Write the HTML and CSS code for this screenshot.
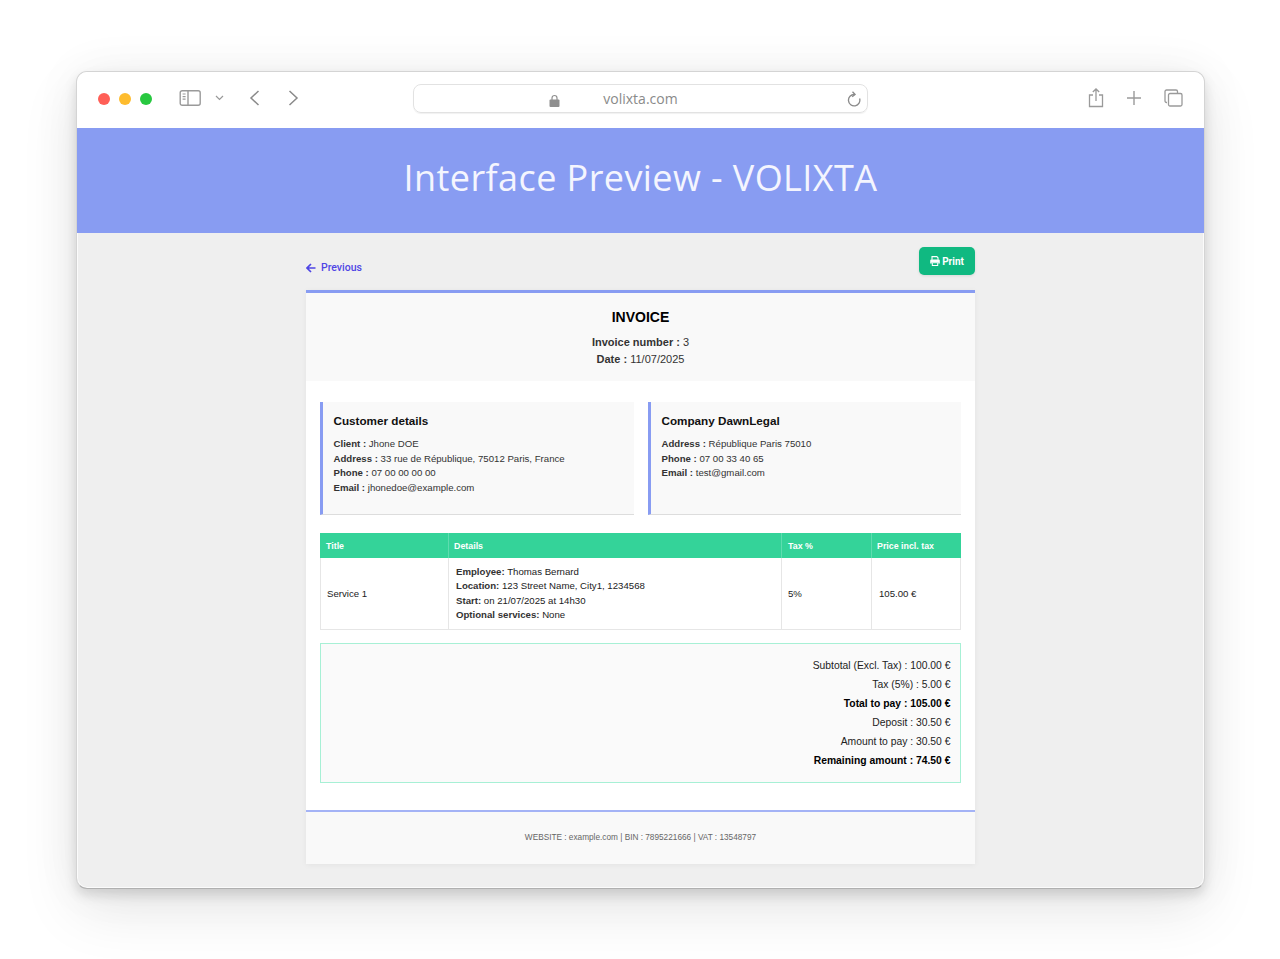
FILE: index.html
```html
<!DOCTYPE html>
<html lang="en">
<head>
<meta charset="utf-8">
<title>Interface Preview - VOLIXTA</title>
<link rel="stylesheet" href="styles.css">
</head>
<body>
<div class="window">
  <header class="chrome">
    <div class="lights">
      <span class="light red"></span><span class="light yellow"></span><span class="light green"></span>
    </div>
    <svg class="ic-sidebar" width="23" height="18" viewBox="0 0 23 18" fill="none" stroke="#9a9a9a" stroke-width="1.4"><rect x="1.2" y="1.7" width="20" height="14.6" rx="2"/><path d="M9 1.7v14.6"/><path d="M3.6 5h3M3.6 7.6h3M3.6 10.2h3" stroke-width="1.2"/></svg>
    <svg class="ic-chev" width="9" height="6" viewBox="0 0 9 6" fill="none" stroke="#999" stroke-width="1.2"><path d="M1 1l3.5 3.5L8 1"/></svg>
    <svg class="ic-back" width="11" height="16" viewBox="0 0 11 16" fill="none" stroke="#8a8a8a" stroke-width="1.5"><path d="M9.5 1L2 8l7.5 7"/></svg>
    <svg class="ic-fwd" width="11" height="16" viewBox="0 0 11 16" fill="none" stroke="#8a8a8a" stroke-width="1.5"><path d="M1.5 1L9 8l-7.5 7"/></svg>
    <div class="address">
      <svg class="ic-lock" width="11" height="13" viewBox="0 0 11 13"><path d="M3 6V4a2.500 2.500 0 0 1 5 0v2" fill="none" stroke="#8f8f8f" stroke-width="1.2"/><rect x="0.500" y="5.500" width="10" height="7.500" rx="1" fill="#8f8f8f"/></svg>
      <span class="url">volixta.com</span>
      <svg class="ic-reload" width="15" height="17" viewBox="0 0 15 17" fill="none" stroke="#8a8a8a" stroke-width="1.3"><path d="M8.300 3.500a5.700 5.700 0 1 0 5.300 4"/><path d="M6.500 0.700l2.600 2.800-2.900 2.300"/></svg>
    </div>
    <div class="actions">
      <svg width="16" height="20" viewBox="0 0 16 20" fill="none" stroke="#9a9a9a" stroke-width="1.3"><path d="M5 7H1.500v11.500h13V7H11"/><path d="M8 13V1M4.800 4L8 1l3.200 3"/></svg>
      <svg width="16" height="16" viewBox="0 0 16 16" fill="none" stroke="#9a9a9a" stroke-width="1.4"><path d="M8 1v14M1 8h14"/></svg>
      <svg width="19" height="18" viewBox="0 0 19 18" fill="none" stroke="#9a9a9a" stroke-width="1.3"><path d="M3 13.500H2.500a1.500 1.500 0 0 1-1.500-1.500V2.500A1.500 1.500 0 0 1 2.500 1H12a1.500 1.500 0 0 1 1.500 1.500V4"/><rect x="4.500" y="4.500" width="13.500" height="12.500" rx="1.500"/></svg>
    </div>
  </header>

  <section class="banner"><h1>Interface Preview - VOLIXTA</h1></section>

  <main class="stage">
    <div class="toolbar">
      <a class="prev"><svg width="10" height="10" viewBox="0 0 10 10" fill="none" stroke="#4f46e5" stroke-width="1.700"><path d="M9.500 5H1.200M5 1L1 5l4 4"/></svg>Previous</a>
      <button class="print"><svg width="10" height="10" viewBox="0 0 10 10"><path d="M2 3.800V.6h4.800L8 1.800v2" fill="none" stroke="#fff" stroke-width="1.100"/><path d="M1.200 3.500h7.600a1 1 0 0 1 1 1v3H8.200V6H1.800v1.500H.2v-3a1 1 0 0 1 1-1z" fill="#fff"/><rect x="2.300" y="6.700" width="5.400" height="2.800" fill="none" stroke="#fff" stroke-width="1"/></svg>Print</button>
    </div>

    <article class="card">
      <div class="card-head">
        <h2>INVOICE</h2>
        <p><b>Invoice number :</b> 3</p>
        <p><b>Date :</b> 11/07/2025</p>
      </div>

      <div class="parties">
        <div class="party">
          <h3>Customer details</h3>
          <p><b>Client :</b> Jhone DOE</p>
          <p><b>Address :</b> 33 rue de République, 75012 Paris, France</p>
          <p><b>Phone :</b> 07 00 00 00 00</p>
          <p><b>Email :</b> jhonedoe@example.com</p>
        </div>
        <div class="party">
          <h3>Company DawnLegal</h3>
          <p><b>Address :</b> République Paris 75010</p>
          <p><b>Phone :</b> 07 00 33 40 65</p>
          <p><b>Email :</b> test@gmail.com</p>
        </div>
      </div>

      <table class="items">
        <thead>
          <tr><th class="c1">Title</th><th class="c2">Details</th><th class="c3">Tax %</th><th class="c4">Price incl. tax</th></tr>
        </thead>
        <tbody>
          <tr>
            <td>Service 1</td>
            <td class="details">
              <div><b>Employee:</b> Thomas Bernard</div>
              <div><b>Location:</b> 123 Street Name, City1, 1234568</div>
              <div><b>Start:</b> on 21/07/2025 at 14h30</div>
              <div><b>Optional services:</b> None</div>
            </td>
            <td>5%</td>
            <td>105.00 €</td>
          </tr>
        </tbody>
      </table>

      <div class="summary">
        <p>Subtotal (Excl. Tax) : 100.00 €</p>
        <p>Tax (5%) : 5.00 €</p>
        <p class="strong">Total to pay : 105.00 €</p>
        <p>Deposit : 30.50 €</p>
        <p>Amount to pay : 30.50 €</p>
        <p class="strong">Remaining amount : 74.50 €</p>
      </div>

      <footer class="card-foot">WEBSITE : example.com | BIN : 7895221666 | VAT : 13548797</footer>
    </article>
  </main>
</div>
</body>
</html>
```
FILE: styles.css
```css
* { box-sizing: border-box; }
html, body { margin: 0; height: 959px; overflow: hidden; background: #fff; }
body { padding: 71px 0 0 76px; font-family: "Liberation Sans", Arial, sans-serif; color: #222; }

.window {
  width: 1129px;
  height: 818px;
  background: #efefef;
  border: 1px solid #d4d4d4;
  border-bottom-color: #b0b0b0;
  border-radius: 11px;
  box-shadow: inset 0 0 0 1px #fbfbfb, 0 6px 12px rgba(0,0,0,.13), 0 22px 60px rgba(0,0,0,.09), 0 0 50px rgba(0,0,0,.05);
}
.chrome, .banner { overflow: hidden; }

.chrome {
  height: 56px;
  background: #fff;
  border-radius: 10px 10px 0 0;
  display: flex;
  align-items: center;
  padding: 0 0 5px 21px;
}
.lights { display: flex; gap: 9px; margin-top: 2px; }
.light { width: 12px; height: 12px; border-radius: 50%; }
.red { background: #ff5f57; }
.yellow { background: #febc2e; }
.green { background: #28c840; }
.ic-sidebar { margin-left: 27px; }
.ic-chev { margin-left: 13px; margin-top: 1px; }
.ic-back { margin-left: 25px; }
.ic-fwd { margin-left: 28px; }

.address {
  position: relative;
  width: 455px;
  height: 29px;
  margin-left: 114px;
  margin-top: 1px;
  border: 1px solid #e2e2e2;
  border-radius: 8px;
  box-shadow: 0 1px 1px rgba(0,0,0,.06);
  display: flex;
  align-items: center;
  justify-content: center;
}
.url { font-family: "Open Sans", sans-serif; font-size: 14px; color: #8a8a8a; }
.ic-lock { position: absolute; left: 135px; top: 9px; }
.ic-reload { position: absolute; right: 6px; top: 6px; }
.actions { display: flex; align-items: center; margin-left: 220px; gap: 22px; }

.banner {
  height: 105px;
  background: #889cf2;
  display: flex;
  align-items: center;
  justify-content: center;
}
.banner h1 {
  margin: 0 0 7px;
  font-family: "Open Sans", sans-serif;
  font-size: 36px;
  font-weight: 400;
  letter-spacing: .42px;
  color: #f4f5fe;
}

.stage { width: 669px; margin: 0 auto; padding-top: 14px; }
.toolbar { display: flex; justify-content: space-between; align-items: flex-end; height: 28px; }
.prev {
  display: flex;
  align-items: center;
  gap: 5px;
  font-family: Roboto, sans-serif;
  font-size: 10.500px;
  font-weight: 500;
  color: #4f46e5;
  margin-bottom: 1px;
}
.print {
  width: 56px;
  height: 28px;
  border: 0;
  border-radius: 5px;
  background: #10b981;
  color: #fff;
  font-family: Roboto, sans-serif;
  font-size: 10px;
  font-weight: 700;
  display: flex;
  align-items: center;
  justify-content: center;
  gap: 2px;
  padding: 0;
  box-shadow: 0 1px 3px rgba(0,0,0,.1);
}

.card {
  margin-top: 15px;
  height: 574px;
  background: #fff;
  border-top: 3px solid #889cf2;
  box-shadow: 0 1px 6px rgba(0,0,0,.05);
  display: flex;
  flex-direction: column;
}
.card-head { height: 88px; background: #f9f9f9; text-align: center; padding-top: 16px; }
.card-head h2 { margin: 0 0 9px; font-size: 14px; line-height: 16px; color: #000; }
.card-head p { margin: 0; font-size: 11px; line-height: 17px; color: #333; }

.parties { display: grid; grid-template-columns: 314px 313px; gap: 14px; padding: 21px 14px 0; }
.party {
  height: 113px;
  background: #f9f9f9;
  border-left: 3px solid #889cf2;
  border-bottom: 1px solid #ddd;
  padding: 12px 10px 0 10.500px;
}
.party h3 { margin: 0 0 9px; font-size: 11.700px; line-height: 14px; color: #111; }
.party p { margin: 0; font-size: 9.650px; line-height: 14.600px; color: #333; }

.items {
  margin: 18px 14px 0;
  width: 641px;
  border-collapse: separate;
  border-spacing: 0;
  table-layout: fixed;
  font-size: 9.650px;
  color: #222;
}
.c1 { width: 129px; }
.c2 { width: 333px; }
.c3 { width: 90px; }
.c4 { width: 89px; }
.items th {
  height: 25px;
  background: #34d399;
  color: #fff;
  font-size: 8.850px;
  font-weight: 700;
  text-align: left;
  padding: 0 5px;
  border-right: 1px solid #5edcaf;
}
.items th.c1, .items th.c3 { padding-left: 6px; }
.items th.c4 { border-right: 0; }
.items td {
  height: 72px;
  border-right: 1px solid #e6e6e6;
  border-bottom: 1px solid #e6e6e6;
  padding: 0 6px;
  vertical-align: middle;
}
.items td:first-child { border-left: 1px solid #e6e6e6; }
.items td:last-child { padding-left: 7px; }
.items .details { padding-left: 7px; line-height: 14.400px; }
.details b { color: #333; }

.summary {
  margin: 13px 14px 0;
  height: 140px;
  background: #fafafa;
  border: 1px solid #a7f0d5;
  padding: 12px 9.500px 0 10px;
  text-align: right;
  font-size: 10.350px;
  line-height: 19px;
}
.summary p { margin: 0; }
.summary .strong { font-weight: 700; color: #000; }

.card-foot {
  margin-top: 27px;
  flex: 1;
  background: #f9f9f9;
  border-top: 2px solid #a4b3f6;
  text-align: center;
  font-size: 8.250px;
  color: #666;
  padding-top: 21px;
}
```
